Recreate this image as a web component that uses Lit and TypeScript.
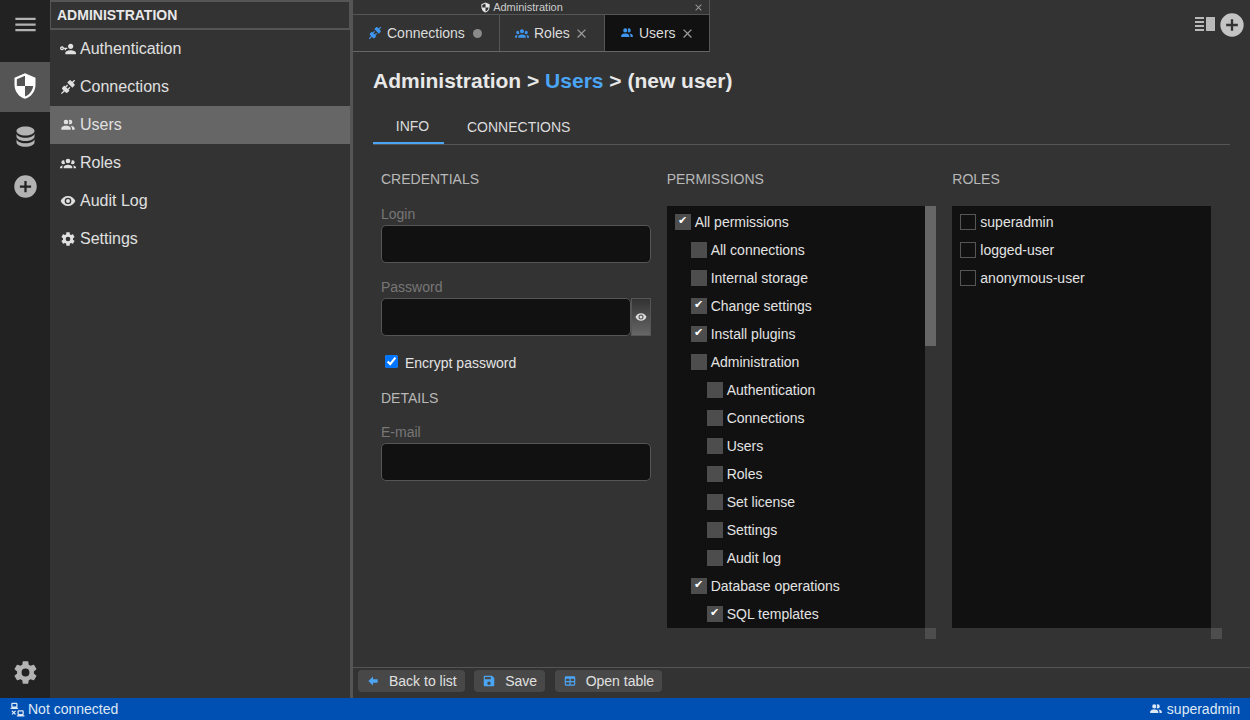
import { LitElement, html, css, svg } from "lit";
import { customElement } from "lit/decorators.js";

const P: Record<string, string> = {
  menu: "M3,6H21V8H3V6M3,11H21V13H3V11M3,16H21V18H3V16Z",
  security: "M12,12H19C18.47,16.11 15.72,19.78 12,20.92V12H5V6.3L12,3.19M12,1L3,5V11C3,16.55 6.84,21.73 12,23C17.16,21.73 21,16.55 21,11V5L12,1Z",
  database: "M12,3C7.58,3 4,4.79 4,7C4,9.21 7.58,11 12,11C16.42,11 20,9.21 20,7C20,4.79 16.42,3 12,3M4,9V12C4,14.21 7.58,16 12,16C16.42,16 20,14.21 20,12V9C20,11.21 16.42,13 12,13C7.58,13 4,11.21 4,9M4,14V17C4,19.21 7.58,21 12,21C16.42,21 20,19.21 20,17V14C20,16.21 16.42,18 12,18C7.58,18 4,16.21 4,14Z",
  plus: "M17,13H13V17H11V13H7V11H11V7H13V11H17M12,2A10,10 0 0,0 2,12A10,10 0 0,0 12,22A10,10 0 0,0 22,12A10,10 0 0,0 12,2Z",
  cog: "M12,15.5A3.5,3.5 0 0,1 8.5,12A3.5,3.5 0 0,1 12,8.5A3.5,3.5 0 0,1 15.5,12A3.5,3.5 0 0,1 12,15.5M19.43,12.97C19.47,12.65 19.5,12.33 19.5,12C19.5,11.67 19.47,11.34 19.43,11L21.54,9.37C21.73,9.22 21.78,8.95 21.66,8.73L19.66,5.27C19.54,5.05 19.27,4.96 19.05,5.05L16.56,6.05C16.04,5.66 15.5,5.32 14.87,5.07L14.5,2.42C14.46,2.18 14.25,2 14,2H10C9.75,2 9.54,2.18 9.5,2.42L9.13,5.07C8.5,5.32 7.96,5.66 7.44,6.05L4.95,5.05C4.73,4.96 4.46,5.05 4.34,5.27L2.34,8.73C2.21,8.95 2.27,9.22 2.46,9.37L4.57,11C4.53,11.34 4.5,11.67 4.5,12C4.5,12.33 4.53,12.65 4.57,12.97L2.46,14.63C2.27,14.78 2.21,15.05 2.34,15.27L4.34,18.73C4.46,18.95 4.73,19.03 4.95,18.95L7.44,17.94C7.96,18.34 8.5,18.68 9.13,18.93L9.5,21.58C9.54,21.82 9.75,22 10,22H14C14.25,22 14.46,21.82 14.5,21.58L14.87,18.93C15.5,18.67 16.04,18.34 16.56,17.94L19.05,18.95C19.27,19.03 19.54,18.95 19.66,18.73L21.66,15.27C21.78,15.05 21.73,14.78 21.54,14.63L19.43,12.97Z",
  users: "M16 17V19H2V17S2 13 9 13 16 17 16 17M12.5 7.5A3.5 3.5 0 1 0 9 11A3.5 3.5 0 0 0 12.5 7.5M15.94 13A5.32 5.32 0 0 1 18 17V19H22V17S22 13.37 15.94 13M15 4A3.39 3.39 0 0 0 13.07 4.59A5 5 0 0 1 13.07 10.41A3.39 3.39 0 0 0 15 11A3.5 3.5 0 0 0 15 4Z",
  group: "M12,5.5A3.5,3.5 0 0,1 15.5,9A3.5,3.5 0 0,1 12,12.5A3.5,3.5 0 0,1 8.5,9A3.5,3.5 0 0,1 12,5.5M5,8C5.56,8 6.08,8.15 6.53,8.42C6.38,9.85 6.8,11.27 7.66,12.38C7.16,13.34 6.16,14 5,14A3,3 0 0,1 2,11A3,3 0 0,1 5,8M19,8A3,3 0 0,1 22,11A3,3 0 0,1 19,14C17.84,14 16.84,13.34 16.34,12.38C17.2,11.27 17.62,9.85 17.47,8.42C17.92,8.15 18.44,8 19,8M5.5,18.25C5.5,16.18 8.41,14.5 12,14.5C15.59,14.5 18.5,16.18 18.5,18.25V20H5.5V18.25M0,20V18.5C0,17.11 1.89,15.94 4.45,15.6C3.86,16.28 3.5,17.22 3.5,18.25V20H0M24,20H20.5V18.25C20.5,17.22 20.14,16.28 19.55,15.6C22.11,15.94 24,17.11 24,18.5V20Z",
  eye: "M12,9A3,3 0 0,0 9,12A3,3 0 0,0 12,15A3,3 0 0,0 15,12A3,3 0 0,0 12,9M12,17A5,5 0 0,1 7,12A5,5 0 0,1 12,7A5,5 0 0,1 17,12A5,5 0 0,1 12,17M12,4.5C7,4.5 2.73,7.61 1,12C2.73,16.39 7,19.5 12,19.5C17,19.5 21.27,16.39 23,12C21.27,7.61 17,4.5 12,4.5Z",
  conn: "M21.4 7.5C22.2 8.3 22.2 9.6 21.4 10.3L18.6 13.1L10.8 5.3L13.6 2.5C14.4 1.7 15.7 1.7 16.5 2.5L18.3 4.3L21.3 1.3L22.7 2.7L19.7 5.7L21.4 7.5M15.6 13.3L14.2 11.9L11.4 14.7L9.3 12.6L12.1 9.8L10.7 8.4L7.9 11.2L6.4 9.8L3.6 12.6C2.8 13.4 2.8 14.7 3.6 15.4L5.4 17.2L1.4 21.2L2.8 22.6L6.8 18.6L8.6 20.4C9.4 21.2 10.7 21.2 11.4 20.4L14.2 17.6L12.8 16.2L15.6 13.3Z",
  key: "M11 10V12H9V14H7V12H5.8C5.4 13.2 4.3 14 3 14C1.3 14 0 12.7 0 11S1.3 8 3 8C4.3 8 5.4 8.8 5.8 10H11M3 10C2.4 10 2 10.4 2 11S2.4 12 3 12 4 11.6 4 11 3.6 10 3 10M16 14C18.7 14 24 15.3 24 18V20H8V18C8 15.3 13.3 14 16 14M16 12C13.8 12 12 10.2 12 8S13.8 4 16 4 20 5.8 20 8 18.2 12 16 12Z",
  back: "M20,9V15H12V19.84L4.16,12L12,4.16V9H20Z",
  save: "M15,9H5V5H15M12,19A3,3 0 0,1 9,16A3,3 0 0,1 12,13A3,3 0 0,1 15,16A3,3 0 0,1 12,19M17,3H5C3.89,3 3,3.9 3,5V19A2,2 0 0,0 5,21H19A2,2 0 0,0 21,19V7L17,3Z",
  table: "M5,4H19A2,2 0 0,1 21,6V18A2,2 0 0,1 19,20H5A2,2 0 0,1 3,18V6A2,2 0 0,1 5,4M5,8V12H11V8H5M13,8V12H19V8H13M5,14V18H11V14H5M13,14V18H19V14H13Z",
  lan: "M4,1C2.89,1 2,1.89 2,3V7C2,8.11 2.89,9 4,9H1V11H13V9H10C11.11,9 12,8.11 12,7V3C12,1.89 11.11,1 10,1H4M4,3H10V7H4V3M14,13C12.89,13 12,13.89 12,15V19C12,20.11 12.89,21 14,21H11V23H23V21H20C21.11,21 22,20.11 22,19V15C22,13.89 21.11,13 20,13H14M3.88,13.46L2.46,14.88L4.59,17L2.46,19.12L3.88,20.54L6,18.41L8.12,20.54L9.54,19.12L7.41,17L9.54,14.88L8.12,13.46L6,15.59L3.88,13.46M14,15H20V19H14V15Z",
  close: "M19,6.41L17.59,5L12,10.59L6.41,5L5,6.41L10.59,12L5,17.59L6.41,19L12,13.41L17.59,19L19,17.59L13.41,12L19,6.41Z",
};

const ic = (n: string, cls = "") =>
  html`<svg class="ic ${cls}" viewBox="0 0 24 24" fill="currentColor">${svg`<path d=${P[n]}></path>`}</svg>`;

type Perm = [number, string, boolean];
const PERMS: Perm[] = [
  [0, "All permissions", true],
  [1, "All connections", false],
  [1, "Internal storage", false],
  [1, "Change settings", true],
  [1, "Install plugins", true],
  [1, "Administration", false],
  [2, "Authentication", false],
  [2, "Connections", false],
  [2, "Users", false],
  [2, "Roles", false],
  [2, "Set license", false],
  [2, "Settings", false],
  [2, "Audit log", false],
  [1, "Database operations", true],
  [2, "SQL templates", true],
];

const ROLES = ["superadmin", "logged-user", "anonymous-user"];

const NAV: [string, string, boolean][] = [
  ["key", "Authentication", false],
  ["conn", "Connections", false],
  ["users", "Users", true],
  ["group", "Roles", false],
  ["eye", "Audit Log", false],
  ["cog", "Settings", false],
];

@customElement("app-root")
export class AppRoot extends LitElement {
  static styles = css`
    :host {
      display: flex;
      flex-direction: column;
      width: 100vw;
      height: 100vh;
      overflow: hidden;
      background: #333;
      color: #e3e3e3;
      font-family: "Liberation Sans", Arial, sans-serif;
      font-size: 14px;
    }
    .ic { display: block; flex: none; width: 1em; height: 1em; }
    .main { flex: 1; min-height: 0; display: flex; }

    .rail { width: 50px; flex: none; background: #222; display: flex; flex-direction: column; color: #b3b3b3; }
    .rail-item { height: 50px; box-sizing: border-box; padding-bottom: 2px; display: flex; align-items: center; justify-content: center; font-size: 27px; }
    .rail-item.menu { height: 48px; margin-bottom: 14px; padding-bottom: 0; }
    .rail-item.sel { background: #555; color: #fff; }
    .rail-item.sel .ic { font-size: 28px; }
    .rail-spacer { flex: 1; }

    .side { width: 300px; flex: none; background: #333; display: flex; flex-direction: column; }
    .side-head {
      height: 30px; box-sizing: border-box; border: 2px solid #555; padding-left: 6px;
      display: flex; align-items: center; font-weight: bold; font-size: 14px; color: #e8e8e8;
      border-left-width: 1px; border-right-width: 1px;
    }
    .nav { height: 38px; display: flex; align-items: center; padding-left: 10px; font-size: 16px; color: #e0e0e0; gap: 4px; }
    .nav .ic { font-size: 16px; }
    .nav.sel { background: #666; }
    .split { width: 3px; flex: none; background: #555; }

    .work { flex: 1; min-width: 0; display: flex; flex-direction: column; }
    .topbar { height: 52px; flex: none; display: flex; justify-content: space-between; }
    .tabgroup { width: 357px; box-sizing: border-box; border-right: 1px solid #555; border-bottom: 1px solid #666; display: flex; flex-direction: column; }
    .grouptitle {
      height: 15px; box-sizing: border-box; border-bottom: 1px solid #555; display: flex; align-items: center;
      justify-content: center; font-size: 11px; color: #ccc; gap: 2px; position: relative; padding-right: 19px;
    }
    .grouptitle .ic { font-size: 11px; color: #e8e8e8; }
    .grouptitle .x { position: absolute; right: 5px; top: 2px; font-size: 11px; color: #999; }
    .tabs { flex: 1; display: flex; }
    .tab { display: flex; align-items: center; gap: 5px; box-sizing: border-box; border-right: 1px solid #555; color: #dcdcdc; }
    .tab:last-child { border-right: 0; }
    .tab .blue { font-size: 14px; color: #3f96ee; }
    .tab .x { font-size: 15px; color: #999; margin-left: -1px; }
    .tab.a { width: 147px; padding-left: 15px; }
    .tab.b { width: 105px; padding-left: 15px; }
    .tab.c { flex: 1; padding-left: 15px; background: #111; }
    .dot { width: 9px; height: 9px; border-radius: 50%; background: #8a8a8a; margin-left: 3px; }
    .tools { display: flex; align-items: flex-start; gap: 2px; padding: 11px 4px 0 0; color: #b9b9b9; }
    .tools .plus { font-size: 28px; color: #c4c4c4; }
    .layout { width: 21px; height: 16px; margin-top: 5px; display: block; }

    .page { flex: 1; min-height: 0; padding: 0 20px; display: flex; flex-direction: column; }
    h1 { margin: 0; height: 58px; display: flex; align-items: center; font-size: 21px; font-weight: bold; color: #e8e8e8; white-space: pre; }
    h1 span { color: #4ba5f5; }
    .subtabs { display: flex; height: 35px; box-sizing: border-box; border-bottom: 1px solid #555; }
    .st { display: flex; align-items: center; justify-content: center; color: #dcdcdc; font-size: 14px; }
    .st.on { width: 71px; height: 34px; border-bottom: 2px solid #4ba5f5; box-sizing: border-box; padding-left: 8px; }
    .st.off { margin-left: 23px; }
    .cols { display: grid; grid-template-columns: repeat(3, 1fr); column-gap: 16px; padding: 0 8px; flex: 1; min-height: 0; }
    .heading { margin: 0; height: 61px; padding-top: 26px; box-sizing: border-box; font-size: 14px; font-weight: normal; color: #b8b8b8; line-height: 16px; }
    .lbl { display: block; color: #777; font-size: 14px; line-height: 16px; margin-bottom: 3px; }
    .inp { display: block; width: 100%; height: 38px; box-sizing: border-box; background: #111; border: 1px solid #555; border-radius: 5px; margin: 0; padding: 0 8px; outline: none; color: #e3e3e3; }
    .field { height: 73px; }
    .pw { display: flex; }
    .pw .inp { flex: 1; min-width: 0; }
    .eye {
      width: 20px; height: 38px; box-sizing: border-box; flex: none; border: 1px solid #555; color: #ddd;
      background: linear-gradient(#333, #666); display: flex; align-items: center; justify-content: center; font-size: 12px;
    }
    .enc { display: flex; align-items: center; gap: 7px; height: 28px; margin: -3px 0 0 4px; color: #e3e3e3; }
    .enc input { margin: 0; width: 13px; height: 13px; position: relative; top: -2px; }
    .details { height: 54px; padding-top: 13px; }
    .email { margin-top: -7px; }

    .listbox { display: grid; grid-template-columns: 1fr 11px; grid-template-rows: 422px 11px; }
    .view { background: #111; padding-top: 2px; box-sizing: border-box; overflow: hidden; }
    .track { background: #333; }
    .thumb { height: 140px; background: #666; }
    .corner { grid-column: 2; background: #4d4d4d; }
    .row { height: 28px; display: flex; align-items: center; gap: 4px; white-space: nowrap; }
    .cb {
      width: 16px; height: 16px; flex: none; box-sizing: border-box; background: #4d4d4d; color: #fff;
      font-size: 11px; line-height: 12px; text-align: center; overflow: hidden;
    }
    .cb.empty { background: transparent; border: 1px solid #555; }

    .bottombar { height: 31px; flex: none; box-sizing: border-box; border-top: 1px solid #555; display: flex; gap: 9.5px; padding: 2px 0 0 5px; }
    .btn { height: 22px; display: flex; align-items: center; background: #484848; border-radius: 4px; color: #e0e0e0; box-sizing: border-box; padding: 0 8px; }
    .btn .ic { font-size: 14px; color: #4ba5f5; margin-right: 9px; }

    .status { height: 22px; flex: none; background: #0050b3; display: flex; align-items: center; justify-content: space-between; padding: 0 10px; color: #dfe8f5; }
    .status div { display: flex; align-items: center; gap: 3px; }
    .status .ic { font-size: 15px; }
    .status .right { gap: 4px; }
    .status .right .ic { font-size: 14px; }
  `;

  private rowLeft(level: number) {
    return `padding-left:${8 + level * 16}px`;
  }

  render() {
    return html`
      <div class="main">
        <div class="rail">
          <div class="rail-item menu">${ic("menu")}</div>
          <div class="rail-item sel">${ic("security")}</div>
          <div class="rail-item">${ic("database")}</div>
          <div class="rail-item">${ic("plus")}</div>
          <div class="rail-spacer"></div>
          <div class="rail-item">${ic("cog")}</div>
        </div>
        <div class="side">
          <div class="side-head">ADMINISTRATION</div>
          ${NAV.map(([i, t, s]) => html`<div class="nav ${s ? "sel" : ""}">${ic(i)}<span>${t}</span></div>`)}
        </div>
        <div class="split"></div>
        <div class="work">
          <div class="topbar">
            <div class="tabgroup">
              <div class="grouptitle">${ic("security")}<span>Administration</span>${ic("close", "x")}</div>
              <div class="tabs">
                <div class="tab a">${ic("conn", "blue")}<span>Connections</span><i class="dot"></i></div>
                <div class="tab b">${ic("group", "blue")}<span>Roles</span>${ic("close", "x")}</div>
                <div class="tab c">${ic("users", "blue")}<span>Users</span>${ic("close", "x")}</div>
              </div>
            </div>
            <div class="tools">
              <svg class="layout" viewBox="0 0 21 16" fill="currentColor">
                <rect x="0" y="1" width="9" height="2"></rect>
                <rect x="0" y="5" width="9" height="2"></rect>
                <rect x="0" y="9" width="9" height="2"></rect>
                <rect x="0" y="13" width="9" height="2"></rect>
                <rect x="11" y="1" width="9" height="14"></rect>
              </svg>
              ${ic("plus", "plus")}
            </div>
          </div>
          <div class="page">
            <h1>Administration &gt; <span>Users</span> &gt; (new user)</h1>
            <div class="subtabs">
              <div class="st on">INFO</div>
              <div class="st off">CONNECTIONS</div>
            </div>
            <div class="cols">
              <div>
                <h3 class="heading">CREDENTIALS</h3>
                <div class="field">
                  <label class="lbl">Login</label>
                  <input class="inp" />
                </div>
                <div class="field">
                  <label class="lbl">Password</label>
                  <div class="pw">
                    <input class="inp" type="password" />
                    <div class="eye">${ic("eye")}</div>
                  </div>
                </div>
                <label class="enc"><input type="checkbox" checked /><span>Encrypt password</span></label>
                <h3 class="heading details">DETAILS</h3>
                <div class="field email">
                  <label class="lbl">E-mail</label>
                  <input class="inp" />
                </div>
              </div>
              <div>
                <h3 class="heading">PERMISSIONS</h3>
                <div class="listbox">
                  <div class="view">
                    ${PERMS.map(
                      ([l, t, c]) => html`<div class="row" style=${this.rowLeft(l)}>
                        <div class="cb">${c ? "✔" : ""}</div>
                        <span>${t}</span>
                      </div>`
                    )}
                  </div>
                  <div class="track"><div class="thumb"></div></div>
                  <div class="corner"></div>
                </div>
              </div>
              <div>
                <h3 class="heading">ROLES</h3>
                <div class="listbox">
                  <div class="view">
                    ${ROLES.map(
                      (t) => html`<div class="row" style=${this.rowLeft(0)}>
                        <div class="cb empty"></div>
                        <span>${t}</span>
                      </div>`
                    )}
                  </div>
                  <div class="track"></div>
                  <div class="corner"></div>
                </div>
              </div>
            </div>
          </div>
          <div class="bottombar">
            <div class="btn">${ic("back")}<span>Back to list</span></div>
            <div class="btn">${ic("save")}<span>Save</span></div>
            <div class="btn">${ic("table")}<span>Open table</span></div>
          </div>
        </div>
      </div>
      <div class="status">
        <div>${ic("lan")}<span>Not connected</span></div>
        <div class="right">${ic("users")}<span>superadmin</span></div>
      </div>
    `;
  }
}
